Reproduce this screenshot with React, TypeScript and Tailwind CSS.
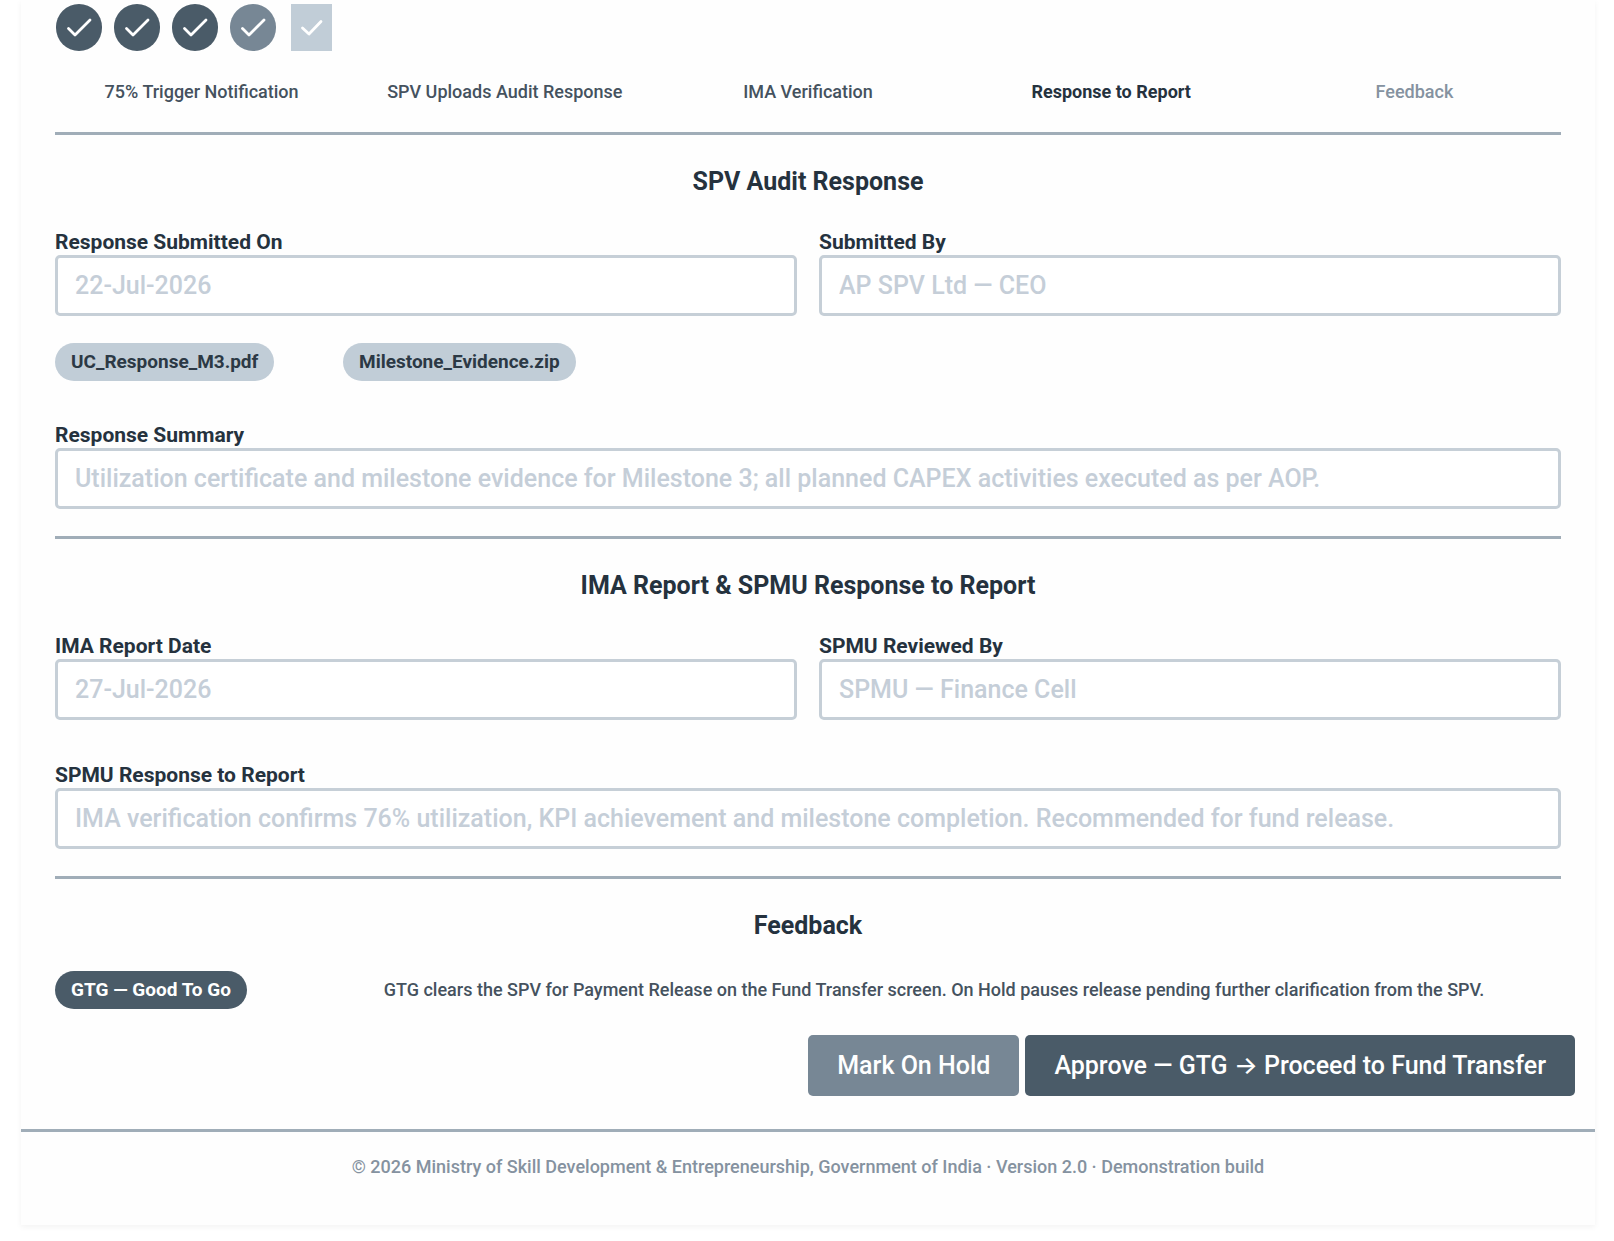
import * as React from "react"
import { clsx } from "clsx"

interface Step {
  label: string
  status: "done" | "current" | "pending"
}

const steps: Step[] = [
  { label: "75% Trigger Notification", status: "done" },
  { label: "SPV Uploads Audit Response", status: "done" },
  { label: "IMA Verification", status: "done" },
  { label: "Response to Report", status: "current" },
  { label: "Feedback", status: "pending" }
]

const attachments = ["UC_Response_M3.pdf", "Milestone_Evidence.zip"]

function StepIcon({ status }: { status: Step["status"] }) {
  const isPending = status === "pending"

  return (
    <span
      className={clsx(
        "flex h-[47px] items-center justify-center",
        isPending ? "w-[41px] bg-[#c1cdd7]" : "w-[46px] rounded-full",
        status === "done" && "bg-[#4a5b68]",
        status === "current" && "bg-[#778795]"
      )}
    >
      <svg
        width={isPending ? 41 : 46}
        height="47"
        viewBox={isPending ? "0 0 41 47" : "0 0 46 47"}
        fill="none"
        stroke="white"
        strokeWidth="2.8"
        strokeLinecap="round"
        strokeLinejoin="round"
        aria-hidden="true"
      >
        <path d={isPending ? "M11.5 24 L18 30 L30 17.5" : "M12.5 24.5 L19 31 L34 16"} />
      </svg>
    </span>
  )
}

function Divider() {
  return <hr className="border-0 h-[3px] bg-[#a0adb8]" />
}

function SectionTitle({ children }: { children: React.ReactNode }) {
  return (
    <h2 className="pt-8 pb-[30px] text-center text-[25px] leading-[30px] font-bold text-[#25323e]">
      {children}
    </h2>
  )
}

interface FieldProps {
  id: string
  label: string
  value: string
}

function Field({ id, label, value }: FieldProps) {
  return (
    <div className="flex min-w-0 flex-col">
      <label htmlFor={id} className="text-[21px] leading-[26px] font-bold text-[#25323e]">
        {label}
      </label>
      <input
        id={id}
        type="text"
        readOnly
        value={value}
        className="h-[61px] w-full rounded-[5px] border-[3px] border-[#c6cfd7] bg-white px-[17px] text-[25px] font-medium text-[#c5ced8] outline-none"
      />
    </div>
  )
}

function Pill({ children, dark = false }: { children: React.ReactNode; dark?: boolean }) {
  return (
    <span
      className={clsx(
        "inline-block rounded-full px-4 py-1.5 text-[19px] leading-[26px] font-bold whitespace-nowrap",
        dark ? "bg-[#4a5b68] text-white" : "bg-[#c1cdd7] text-[#2c3945]"
      )}
    >
      {children}
    </span>
  )
}

export default function App() {
  return (
    <div className="bg-white pr-[19px] pb-4 pl-[21px] font-['Roboto','Liberation_Sans',sans-serif]">
      <main className="bg-[#fefefe] pt-1 shadow-[0_2px_6px_rgba(0,0,0,0.05)]">
        <div className="px-[34px]">
          {/* Progress */}
          <div className="flex gap-3 px-px">
            {steps.map((step) => (
              <div key={step.label} className="flex w-[46px] justify-center">
                <StepIcon status={step.status} />
              </div>
            ))}
          </div>
          <ol className="grid grid-cols-5 gap-2.5 pt-[29px] pb-7 text-center text-[18px] leading-6">
            {steps.map((step) => (
              <li
                key={step.label}
                className={clsx(
                  step.status === "done" && "font-medium text-[#45525e]",
                  step.status === "current" && "font-bold text-[#25323e]",
                  step.status === "pending" && "font-medium text-[#8592a0]"
                )}
              >
                {step.label}
              </li>
            ))}
          </ol>
          <Divider />

          {/* SPV response */}
          <section>
            <SectionTitle>SPV Audit Response</SectionTitle>
            <div className="grid grid-cols-2 gap-[22px] pt-0.5">
              <Field id="submitted-on" label="Response Submitted On" value="22-Jul-2026" />
              <Field id="submitted-by" label="Submitted By" value="AP SPV Ltd — CEO" />
            </div>
            <div className="grid grid-cols-[288px_auto] justify-start justify-items-start pt-[27px] pb-[41px]">
              {attachments.map((name) => (
                <Pill key={name}>{name}</Pill>
              ))}
            </div>
            <Field
              id="response-summary"
              label="Response Summary"
              value="Utilization certificate and milestone evidence for Milestone 3; all planned CAPEX activities executed as per AOP."
            />
          </section>
          <div className="pt-[27px]">
            <Divider />
          </div>

          {/* IMA report */}
          <section>
            <SectionTitle>IMA Report &amp; SPMU Response to Report</SectionTitle>
            <div className="grid grid-cols-2 gap-[22px] pt-0.5 pb-[42px]">
              <Field id="report-date" label="IMA Report Date" value="27-Jul-2026" />
              <Field id="reviewed-by" label="SPMU Reviewed By" value="SPMU — Finance Cell" />
            </div>
            <Field
              id="spmu-response"
              label="SPMU Response to Report"
              value="IMA verification confirms 76% utilization, KPI achievement and milestone completion. Recommended for fund release."
            />
          </section>
          <div className="pt-[27px]">
            <Divider />
          </div>

          {/* Feedback */}
          <section>
            <SectionTitle>Feedback</SectionTitle>
            <div className="grid grid-cols-[252px_1fr] items-center justify-items-start">
              <Pill dark>GTG — Good To Go</Pill>
              <p className="w-full text-center text-[18px] leading-6 font-medium text-[#45525e]">
                GTG clears the SPV for Payment Release on the Fund Transfer screen. On Hold pauses release pending further clarification from the SPV.
              </p>
            </div>
          </section>
        </div>

        <div className="flex justify-end gap-1.5 px-5 pt-[26px] pb-[33px] text-[25px] font-medium text-white">
          <button type="button" className="h-[61px] rounded-[5px] bg-[#778795] px-[29px]">
            Mark On Hold
          </button>
          <button type="button" className="h-[61px] rounded-[5px] bg-[#4a5b68] px-[29px]">
            Approve — GTG <span className="font-['Inter']">→</span> Proceed to Fund Transfer
          </button>
        </div>

        <Divider />
        <footer className="pt-[23px] pb-[46px] text-center text-[18px] leading-6 font-medium text-[#8592a0]">
          © 2026 Ministry of Skill Development &amp; Entrepreneurship, Government of India · Version 2.0 · Demonstration build
        </footer>
      </main>
    </div>
  )
}
